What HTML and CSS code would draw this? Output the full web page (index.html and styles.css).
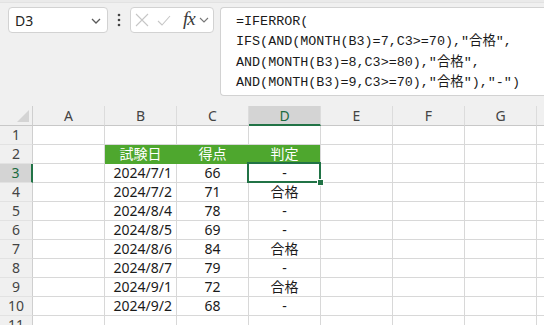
FILE: index.html
```html
<!DOCTYPE html>
<html>
<head>
<meta charset="utf-8">
<title>Book1</title>
<link rel="stylesheet" href="styles.css">
</head>
<body>

<div class="ribbon-edge"></div>

<div class="toolbar">
	<div class="namebox">
		<span>D3</span>
		<svg class="chev" width="10" height="6" viewBox="0 0 10 6"><polyline points="1,1 5,5 9,1" fill="none" stroke="#5a5a5a" stroke-width="1.3"/></svg>
	</div>
	<div class="dots">
		<svg width="4" height="14" viewBox="0 0 4 14"><circle cx="2" cy="2" r="1.3" fill="#444"/><circle cx="2" cy="7" r="1.3" fill="#444"/><circle cx="2" cy="12" r="1.3" fill="#444"/></svg>
	</div>
	<div class="fnbox">
		<svg class="ico" width="14" height="14" viewBox="0 0 14 14"><path d="M1 1 L13 13 M13 1 L1 13" stroke="#c6c6c6" stroke-width="1.1"/></svg>
		<svg class="ico" width="14" height="14" viewBox="0 0 14 14"><polyline points="1,8 5,12 13,3" fill="none" stroke="#c6c6c6" stroke-width="1.1"/></svg>
		<span class="fx">fx</span>
		<svg class="chev-s" width="10" height="6" viewBox="0 0 10 6"><polyline points="1,1 5,5 9,1" fill="none" stroke="#777" stroke-width="1.1"/></svg>
	</div>
	<div class="formula">
		<div class="line">=IFERROR(</div>
		<div class="line">IFS(AND(MONTH(B3)=7,C3&gt;=70),"合格",</div>
		<div class="line">AND(MONTH(B3)=8,C3&gt;=80),"合格",</div>
		<div class="line">AND(MONTH(B3)=9,C3&gt;=70),"合格"),"-")</div>
	</div>
</div>

<div class="sheet">
	<div class="corner"><span class="tri"></span></div>
	<div class="colhead">A</div>
	<div class="colhead">B</div>
	<div class="colhead">C</div>
	<div class="colhead sel">D</div>
	<div class="colhead">E</div>
	<div class="colhead">F</div>
	<div class="colhead">G</div>
	<div class="colhead">H</div>

	<div class="rowhead">1</div>
	<div class="cell"></div><div class="cell"></div><div class="cell"></div><div class="cell"></div><div class="cell"></div><div class="cell"></div><div class="cell"></div><div class="cell"></div>

	<div class="rowhead">2</div>
	<div class="cell"></div>
	<div class="cell th">試験日</div>
	<div class="cell th">得点</div>
	<div class="cell th last">判定</div>
	<div class="cell"></div><div class="cell"></div><div class="cell"></div><div class="cell"></div>

	<div class="rowhead sel">3</div>
	<div class="cell"></div>
	<div class="cell date">2024/7/1</div>
	<div class="cell num">66</div>
	<div class="cell num active">-</div>
	<div class="cell"></div><div class="cell"></div><div class="cell"></div><div class="cell"></div>

	<div class="rowhead">4</div>
	<div class="cell"></div>
	<div class="cell date">2024/7/2</div>
	<div class="cell num">71</div>
	<div class="cell num">合格</div>
	<div class="cell"></div><div class="cell"></div><div class="cell"></div><div class="cell"></div>

	<div class="rowhead">5</div>
	<div class="cell"></div>
	<div class="cell date">2024/8/4</div>
	<div class="cell num">78</div>
	<div class="cell num">-</div>
	<div class="cell"></div><div class="cell"></div><div class="cell"></div><div class="cell"></div>

	<div class="rowhead">6</div>
	<div class="cell"></div>
	<div class="cell date">2024/8/5</div>
	<div class="cell num">69</div>
	<div class="cell num">-</div>
	<div class="cell"></div><div class="cell"></div><div class="cell"></div><div class="cell"></div>

	<div class="rowhead">7</div>
	<div class="cell"></div>
	<div class="cell date">2024/8/6</div>
	<div class="cell num">84</div>
	<div class="cell num">合格</div>
	<div class="cell"></div><div class="cell"></div><div class="cell"></div><div class="cell"></div>

	<div class="rowhead">8</div>
	<div class="cell"></div>
	<div class="cell date">2024/8/7</div>
	<div class="cell num">79</div>
	<div class="cell num">-</div>
	<div class="cell"></div><div class="cell"></div><div class="cell"></div><div class="cell"></div>

	<div class="rowhead">9</div>
	<div class="cell"></div>
	<div class="cell date">2024/9/1</div>
	<div class="cell num">72</div>
	<div class="cell num">合格</div>
	<div class="cell"></div><div class="cell"></div><div class="cell"></div><div class="cell"></div>

	<div class="rowhead">10</div>
	<div class="cell"></div>
	<div class="cell date">2024/9/2</div>
	<div class="cell num">68</div>
	<div class="cell num">-</div>
	<div class="cell"></div><div class="cell"></div><div class="cell"></div><div class="cell"></div>

	<div class="rowhead">11</div>
	<div class="cell"></div><div class="cell"></div><div class="cell"></div><div class="cell"></div><div class="cell"></div><div class="cell"></div><div class="cell"></div><div class="cell"></div>
</div>

</body>
</html>
```

FILE: styles.css
```css
html,
body {
	margin: 0;
	background: #f0f0f0;
	overflow: hidden;
	font: 14px "Noto Sans", "Noto Sans CJK JP", sans-serif;
	color: #1a1a1a;
}

.ribbon-edge {
	height: 2px;
	border-bottom: 1px solid #e2e2e2;
	background: #eaeaea;
}

/* name box + formula bar */
.toolbar {
	display: flex;
	align-items: flex-start;
	padding: 4px 0 0 8px;
	box-sizing: border-box;
	height: 96px;
}

.namebox {
	width: 100px;
	height: 26px;
	box-sizing: border-box;
	border: 1px solid #d2d2d2;
	border-radius: 4px;
	background: #fff;
	display: flex;
	align-items: center;
	justify-content: space-between;
	padding: 0 6px 0 6px;
}
.namebox span {
	font-size: 14px;
	color: #222;
}
.namebox .chev {
	margin-top: 1px;
}

.dots {
	width: 22px;
	height: 26px;
	display: flex;
	align-items: center;
	justify-content: center;
}

.fnbox {
	width: 84px;
	height: 26px;
	box-sizing: border-box;
	border: 1px solid #d2d2d2;
	border-radius: 4px;
	background: #fff;
	display: flex;
	align-items: center;
	padding-left: 4px;
	margin-right: 6px;
}
.fnbox .ico {
	margin-right: 8px;
}
.fnbox .fx {
	font: italic 19px "Liberation Serif", serif;
	color: #3a3a3a;
	margin-left: 4px;
	letter-spacing: -1px;
	margin-top: -3px;
}
.fnbox .chev-s {
	margin-left: 4px;
}

.formula {
	flex: 1;
	height: 89px;
	margin-right: -12px;
	box-sizing: border-box;
	border: 1px solid #d2d2d2;
	border-right: none;
	border-radius: 4px 0 0 4px;
	background: #fff;
	padding: 4px 0 0 15px;
	font: 13.4px "Liberation Mono", "Noto Sans CJK JP", monospace;
	color: #1a1a1a;
	overflow: hidden;
}
.formula .line {
	height: 20.3px;
	line-height: 20px;
	white-space: nowrap;
}

/* grid */
.sheet {
	margin-top: 7px;
	display: grid;
	grid-template-columns: 33px repeat(8, 72px);
	grid-template-rows: 20px repeat(11, 19px);
	width: 700px;
}

.corner,
.colhead,
.rowhead,
.cell {
	box-sizing: border-box;
	border-right: 1px solid #d8d8d8;
	border-bottom: 1px solid #d8d8d8;
}

.corner {
	position: relative;
	border-right-color: #cfcfcf;
	border-bottom-color: #c8c8c8;
}
.corner .tri {
	position: absolute;
	right: 3px;
	bottom: 3px;
	width: 0;
	height: 0;
	border-left: 12px solid transparent;
	border-bottom: 12px solid #d4d4d4;
}

.colhead {
	text-align: center;
	line-height: 19px;
	color: #444;
	border-bottom-color: #c8c8c8;
	border-right-color: #dcdcdc;
}
.colhead.sel {
	background: #d4d4d4;
	border-bottom: 2px solid #217346;
	color: #1d6b40;
}

.rowhead {
	text-align: center;
	line-height: 18px;
	color: #444;
	border-right-color: #cfcfcf;
	border-bottom-color: #e2e2e2;
}
.rowhead.sel {
	background: #d4d4d4;
	border-right: 2px solid #217346;
	color: #1d6b40;
}

.cell {
	background: #fff;
	line-height: 18px;
	white-space: nowrap;
}

.th {
	background: #4ea72e;
	border-color: #4ea72e;
	color: #fff;
	text-align: center;
}
.th.last {
	border-right-color: #d8d8d8;
}

.date {
	text-align: right;
	padding-right: 4px;
}
.num {
	text-align: center;
}

.active {
	position: relative;
}
.active::after {
	content: "";
	position: absolute;
	left: -2px;
	top: -2px;
	right: -1px;
	bottom: -1px;
	border: 2px solid #217346;
}
.active::before {
	content: "";
	position: absolute;
	right: -4px;
	bottom: -4px;
	width: 5px;
	height: 5px;
	background: #217346;
	border: 1px solid #fff;
	z-index: 1;
}
```
